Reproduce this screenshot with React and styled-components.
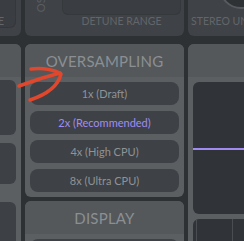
import React from 'react';
import styled, { createGlobalStyle } from 'styled-components';

const GlobalStyle = createGlobalStyle`
  html, body {
    margin: 0;
    padding: 0;
    background: #2e3134;
    overflow: hidden;
  }
  body {
    font-family: Lato, "Liberation Sans", sans-serif;
  }
`;

const Page = styled.div`
  position: relative;
  width: 244px;
  height: 241px;
  overflow: hidden;
  background: #2e3134;
`;

// the rack is wider than the window, so it's scrolled a bit to the right
const Rack = styled.div`
  display: grid;
  grid-template-columns: 120px 159px 150px;
  grid-template-rows: 36px auto;
  column-gap: 4px;
  row-gap: 8px;
  margin-left: -99px;
`;

const TopPanel = styled.div`
  background: #3f4246;
  border-radius: 0 0 6px 6px;
  overflow: hidden;
  display: flex;
  padding-right: ${(p) => p.$padRight || 0}px;
`;

const SmallBox = styled.div`
  flex: 1;
  height: 28px;
  background: #3a3d41;
  border: 1px solid #35383b;
  border-top: none;
  border-radius: 0 0 6px 6px;
  box-sizing: border-box;
  display: flex;
  justify-content: flex-end;
  padding: 0 11px 0 0;
`;

const TopLabel = styled.div`
  font-size: 10.5px;
  line-height: 10px;
  color: #62666a;
  white-space: nowrap;
  margin-top: ${(p) => p.$top || 0}px;
  text-align: ${(p) => p.$align || 'center'};
`;

const OscCol = styled.div`
  width: 37px;
  padding-left: 10px;
  box-sizing: border-box;
`;

const VerticalLabel = styled.div`
  writing-mode: vertical-rl;
  transform: rotate(180deg);
  font-size: 11px;
  line-height: 11px;
  color: #595d61;
  margin-top: -10px;
`;

const DisplayCol = styled.div`
  flex: 1;
  display: flex;
  flex-direction: column;
`;

const DisplayBox = styled.div`
  height: 15px;
  background: #3a3d41;
  border: 1px solid #36393c;
  border-top: none;
  border-radius: 0 0 6px 6px;
  box-sizing: border-box;
`;

const KnobCol = styled.div`
  flex: 1;
  display: flex;
  flex-direction: column;
  padding-left: 3px;
`;

const Column = styled.div`
  display: flex;
  flex-direction: column;
  gap: 4px;
`;

const Panel = styled.div`
  background: #5b5f62;
  border-radius: 6px;
  overflow: hidden;
  display: flex;
  flex-direction: column;
  flex: ${(p) => (p.$grow ? 1 : 'none')};
`;

const Header = styled.div`
  height: 33px;
  background: #54585b;
  display: flex;
  align-items: center;
  justify-content: center;
  font-size: 15px;
  color: #8b8f93;
  letter-spacing: 0.2px;
`;

const Body = styled.div`
  display: flex;
  flex-direction: column;
  gap: ${(p) => p.$gap || 6}px;
  padding: 5px;
`;

const Option = styled.div`
  height: 23px;
  border-radius: 8px;
  background: #3e4145;
  display: flex;
  align-items: center;
  justify-content: center;
  font-size: 11px;
  color: ${(p) => (p.$active ? '#a38cf0' : '#8f9397')};
`;

const SideBox = styled.div`
  height: ${(p) => p.$h}px;
  margin-top: ${(p) => p.$mt || 0}px;
  margin-right: 5px;
  background: #3d4044;
  border-radius: 6px;
`;

const Scope = styled.div`
  height: 132px;
  background: #303337;
  border-radius: 6px 0 0 6px;
  margin-right: -5px;
  display: flex;
  flex-direction: column;
`;

const Trace = styled.div`
  height: 2px;
  margin-top: 66px;
  background: #a18af0;
`;

const Grid = styled.div`
  height: 40px;
  background: #303337;
  border-radius: 6px 0 0 0;
  margin-right: -5px;
  display: grid;
  grid-template-columns: 4px 36px 1fr;
`;

const GridCell = styled.div`
  border-right: 1px solid #4a4e52;
`;

const Overlay = styled.svg`
  position: absolute;
  left: 0;
  top: 0;
  pointer-events: none;
`;

const options = ['1x (Draft)', '2x (Recommended)', '4x (High CPU)', '8x (Ultra CPU)'];

export default function App() {
  return (
    <Page>
      <GlobalStyle />
      <Rack>
        <TopPanel $padRight={5}>
          <SmallBox>
            <TopLabel $top={16}>PHASE</TopLabel>
          </SmallBox>
        </TopPanel>
        <TopPanel $padRight={3}>
          <OscCol>
            <VerticalLabel>OSC</VerticalLabel>
          </OscCol>
          <DisplayCol>
            <DisplayBox />
            <TopLabel $top={1}>DETUNE RANGE</TopLabel>
          </DisplayCol>
        </TopPanel>
        <TopPanel>
          <KnobCol>
            <svg width="60" height="10" viewBox="0 0 60 10">
              <circle cx="50" cy="-13" r="21" fill="#2f3235" stroke="#575b5f" strokeWidth="2" />
            </svg>
            <TopLabel $top={6} $align="left">STEREO UNISON</TopLabel>
          </KnobCol>
        </TopPanel>

        <Column>
          <Panel $grow>
            <Header />
            <SideBox $h={55} $mt={3} />
            <SideBox $h={41} $mt={8} />
            <SideBox $h={60} $mt={18} />
          </Panel>
        </Column>

        <Column>
          <Panel>
            <Header>OVERSAMPLING</Header>
            <Body>
              {options.map((o, i) => (
                <Option key={o} $active={i === 1}>{o}</Option>
              ))}
            </Body>
          </Panel>
          <Panel>
            <Header>DISPLAY</Header>
            <Body>
              <Option>Waveform</Option>
            </Body>
          </Panel>
        </Column>

        <Column>
          <Panel $grow>
            <Header />
            <Body $gap={5}>
              <Scope>
                <Trace />
              </Scope>
              <Grid>
                <GridCell />
                <GridCell />
                <div />
              </Grid>
            </Body>
          </Panel>
        </Column>
      </Rack>

      <Overlay width="244" height="241" viewBox="0 0 244 241">
        <g fill="none" stroke="#e0472d" strokeWidth="3.5" strokeLinecap="round">
          <path d="M31 69 Q46 67 60 73" />
          <path d="M19 86 Q40 78 60 73" />
          <path d="M61 74 Q57 91 30 100" />
        </g>
      </Overlay>
    </Page>
  );
}
